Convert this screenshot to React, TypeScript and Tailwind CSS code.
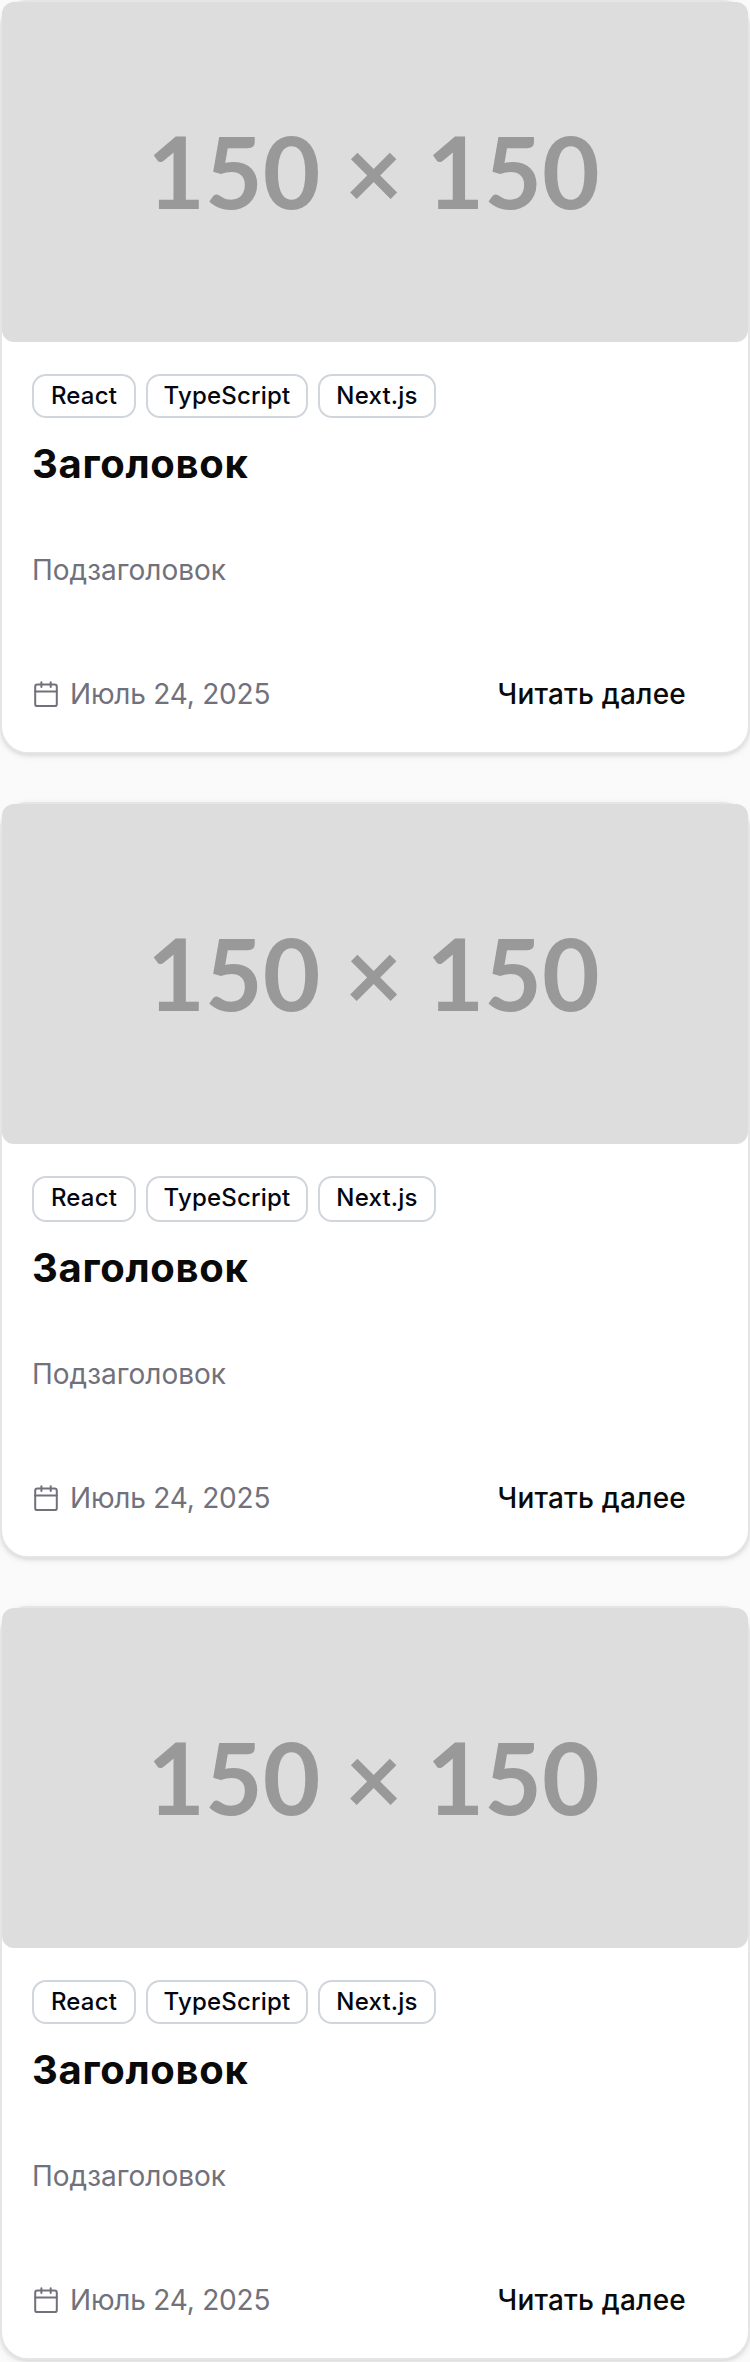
import React from "react";

const tags = [
  { name: "React", width: "w-[104px]" },
  { name: "TypeScript", width: "w-[162px]" },
  { name: "Next.js", width: "w-[118px]" },
];

function CalendarIcon() {
  return (
    <svg className="size-7 shrink-0" viewBox="0 0 28 28" fill="none" stroke="currentColor" strokeWidth="2" strokeLinecap="round" strokeLinejoin="round">
      <rect x="3.2" y="4.5" width="21.6" height="21.6" rx="2.2" />
      <path d="M9.4 2.3v4.6M18.7 2.3v4.6M3.2 11.4h21.6" />
    </svg>
  );
}

function Card({ className = "h-[754px]", tagHeight = "h-11" }: { className?: string; tagHeight?: string }) {
  return (
    <article className={`flex shrink-0 flex-col rounded-[28px] border-2 border-[#e5e5e5] bg-white text-[#0a0a0a] shadow-[0_2px_6px_rgba(0,0,0,0.1),0_2px_4px_-2px_rgba(0,0,0,0.1)] ${className}`}>
      <div className="flex h-[340px] shrink-0 items-center justify-center rounded-xl bg-[#ddd] pr-[3px] pb-[3px] font-[Lato,sans-serif] text-[99.5px] leading-none font-bold text-[#999]">
        150 × 150
      </div>
      <div className="flex flex-1 flex-col px-[30px] pt-8">
        <ul className="flex gap-[10px]">
          {tags.map((tag) => (
            <li key={tag.name} className={`flex ${tagHeight} ${tag.width} justify-center rounded-[14px] border-2 border-[#d1d5dc] pt-1 text-2xl leading-8 font-medium tracking-[0.2px] text-[#030712]`}>
              {tag.name}
            </li>
          ))}
        </ul>
        <h2 className="mt-[22px] text-[40px] leading-[48px] font-bold tracking-[0.7px]">Заголовок</h2>
        <p className="mt-[62px] text-[28px] leading-10 text-[#71717b]">Подзаголовок</p>
        <div className="mt-[84px] flex items-center justify-between pr-8">
          <span className="flex items-center gap-[10px] text-[28px] leading-10 tracking-[-0.2px] text-[#71717b]">
            <CalendarIcon />
            Июль 24, 2025
          </span>
          <a href="#" className="text-[28px] leading-10 font-medium tracking-[0.2px]">Читать далее</a>
        </div>
      </div>
    </article>
  );
}

export default function App() {
  return (
    <main className="flex h-[2362px] flex-col gap-12 overflow-hidden bg-[#fafafa] font-[Inter,sans-serif]">
      <Card />
      <Card className="h-[756px]" tagHeight="h-[46px]" />
      <Card />
    </main>
  );
}
